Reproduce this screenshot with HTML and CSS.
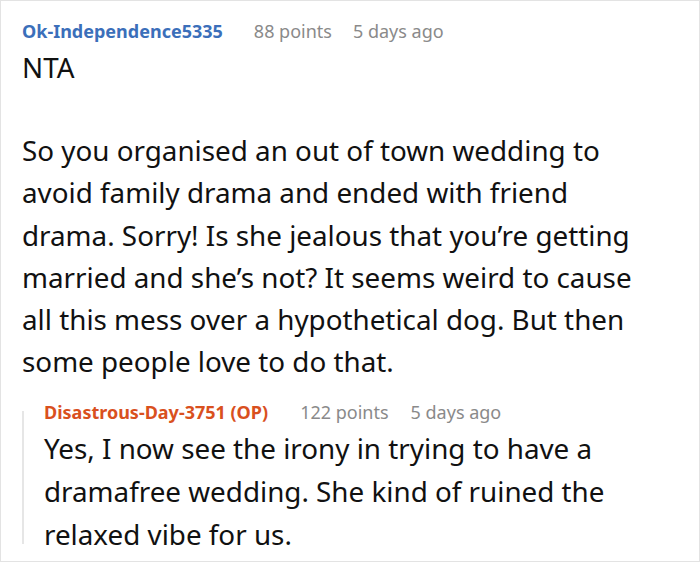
FILE: index.html
```html
<!DOCTYPE html>
<html>
<head>
<meta charset="utf-8">
<link rel="stylesheet" href="styles.css">
</head>
<body>
<div class="frame">
  <div class="comment">
    <div class="meta">
      <span class="author">Ok-Independence5335</span>
      <span class="info">88 points</span>
      <span class="info">5 days ago</span>
    </div>
    <div class="body">
      <p>NTA</p>
      <p>So you organised an out of town wedding to avoid family drama and ended with friend drama. Sorry! Is she jealous that you’re getting married and she’s not? It seems weird to cause all this mess over a hypothetical dog. But then some people love to do that.</p>
    </div>
    <div class="reply">
      <div class="meta">
        <span class="author op">Disastrous-Day-3751 (OP)</span>
        <span class="info">122 points</span>
        <span class="info">5 days ago</span>
      </div>
      <div class="reply-body">
        <p>Yes, I now see the irony in trying to have a dramafree wedding. She kind of ruined the relaxed vibe for us.</p>
      </div>
    </div>
  </div>
</div>
</body>
</html>
```
FILE: styles.css
```css
html, body {
  margin: 0;
  padding: 0;
  background: #fff;
}
.frame {
  box-sizing: border-box;
  width: 700px;
  height: 562px;
  border: 1px solid #e3e3e3;
  overflow: hidden;
  font-family: "Noto Sans", sans-serif;
  color: #111;
}
.comment {
  padding: 15px 48px 0 21px;
}
.meta {
  display: flex;
  align-items: baseline;
  gap: 31px;
  font-size: 18px;
  line-height: 30px;
  white-space: nowrap;
}
.meta .info {
  color: #8a8a8a;
}
.meta .info + .info {
  margin-left: -10px;
}
.author {
  font-weight: 700;
  color: #3b6fba;
}
.author.op {
  color: #d9501e;
}
.body {
  font-size: 27.8px;
  line-height: 42.2px;
}
.body p {
  margin: 0 0 41px 0;
}
.body p:last-child {
  margin-bottom: 0;
}
.reply {
  position: relative;
  padding-left: 22px;
  margin-top: 15px;
}
.reply::before {
  content: "";
  position: absolute;
  left: 0;
  top: 14px;
  height: 133px;
  width: 2px;
  background: #e6e6e6;
}
.reply .meta {
  gap: 32px;
}
.reply-body {
  font-size: 27.8px;
  line-height: 43px;
}
.reply-body p {
  margin: 0;
}
```
